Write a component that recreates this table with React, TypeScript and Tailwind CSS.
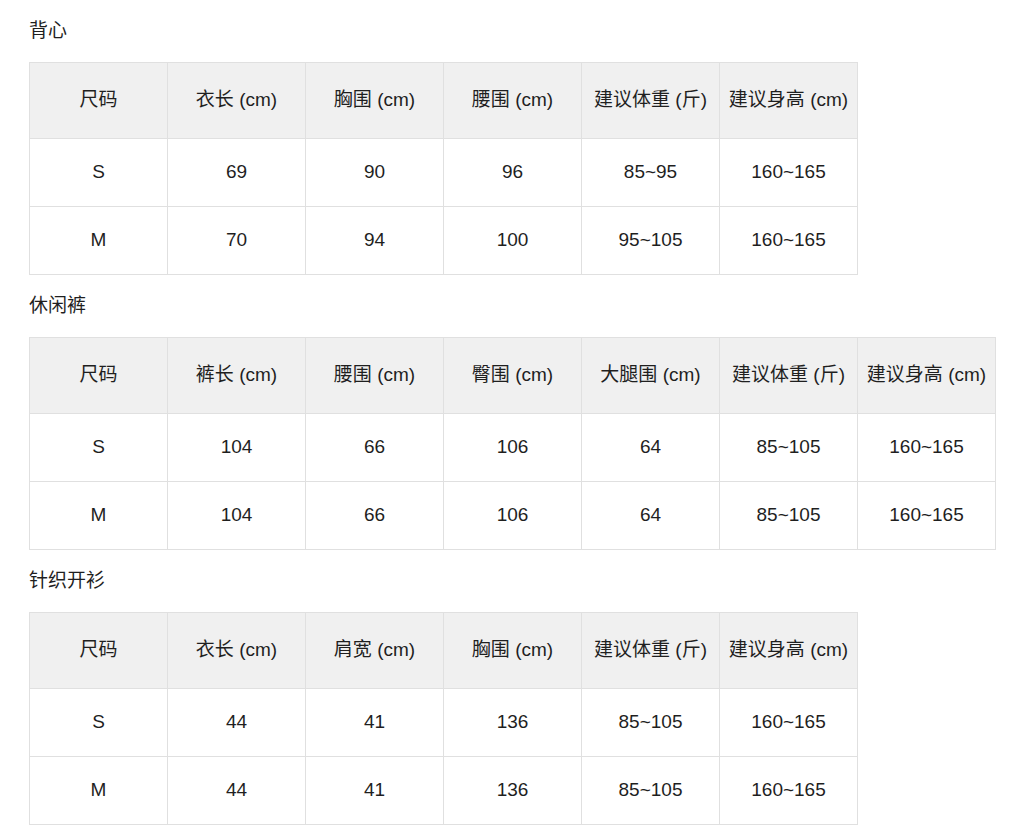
const tables = [
  {
    title: '背心',
    head: ['尺码', '衣长 (cm)', '胸围 (cm)', '腰围 (cm)', '建议体重 (斤)', '建议身高 (cm)'],
    rows: [
      ['S', '69', '90', '96', '85~95', '160~165'],
      ['M', '70', '94', '100', '95~105', '160~165'],
    ],
  },
  {
    title: '休闲裤',
    head: ['尺码', '裤长 (cm)', '腰围 (cm)', '臀围 (cm)', '大腿围 (cm)', '建议体重 (斤)', '建议身高 (cm)'],
    rows: [
      ['S', '104', '66', '106', '64', '85~105', '160~165'],
      ['M', '104', '66', '106', '64', '85~105', '160~165'],
    ],
  },
  {
    title: '针织开衫',
    head: ['尺码', '衣长 (cm)', '肩宽 (cm)', '胸围 (cm)', '建议体重 (斤)', '建议身高 (cm)'],
    rows: [
      ['S', '44', '41', '136', '85~105', '160~165'],
      ['M', '44', '41', '136', '85~105', '160~165'],
    ],
  },
];

export default function App() {
  return (
    <div
      className="min-h-screen bg-white pl-[29px] pt-[17px] text-[#1f1f1f]"
      style={{ fontFamily: '"Liberation Sans", "Noto Sans CJK SC", sans-serif' }}
    >
      {tables.map((t) => (
        <section key={t.title} className="mb-[17px]">
          <h2 className="h-[28px] text-[19px] leading-[28px]">{t.title}</h2>
          <table className="mt-[17px] table-fixed border-collapse text-[19px]">
            <thead>
              <tr className="h-[76px] bg-[#f0f0f0]">
                {t.head.map((h) => (
                  <th key={h} className="w-[138px] border border-[#e0e0e0] p-0 text-center font-normal">
                    {h}
                  </th>
                ))}
              </tr>
            </thead>
            <tbody>
              {t.rows.map((r, i) => (
                <tr key={i} className="h-[68px]">
                  {r.map((c, j) => (
                    <td key={j} className="border border-[#e0e0e0] p-0 text-center">
                      {c}
                    </td>
                  ))}
                </tr>
              ))}
            </tbody>
          </table>
        </section>
      ))}
    </div>
  );
}
